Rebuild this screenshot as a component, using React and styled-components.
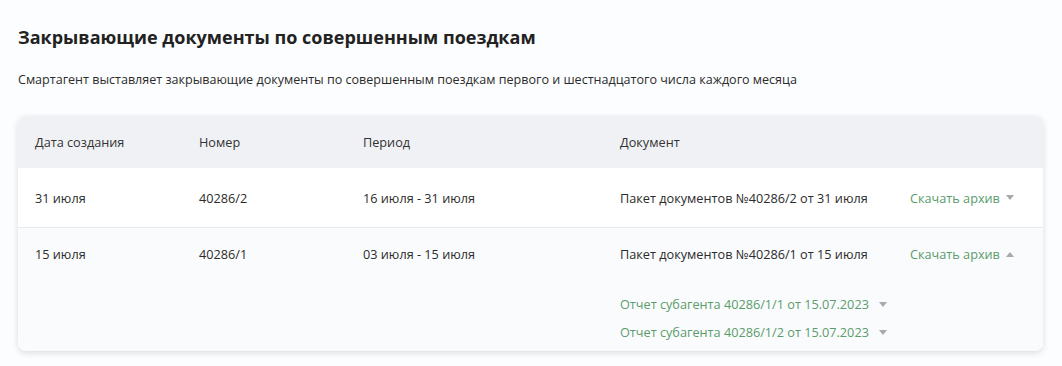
import React from "react";
import styled, { createGlobalStyle } from "styled-components";

const GlobalStyle = createGlobalStyle`
  *, *::before, *::after { box-sizing: border-box; }
  body {
    margin: 0;
    background: #fcfdfe;
    font-family: "Open Sans", "Noto Sans", sans-serif;
    color: #2b2b2b;
  }
`;

const Page = styled.div`
  padding: 26px 19px 15px 18px;
`;

const Title = styled.h1`
  margin: 0;
  font-size: 18px;
  line-height: 22px;
  font-weight: 700;
  color: #222;
`;

const Lead = styled.p`
  margin: 23px 0 0;
  font-size: 12.55px;
  line-height: 18px;
  color: #2b2b2b;
`;

const Card = styled.div`
  margin-top: 27px;
  border-radius: 8px;
  background: #fff;
  box-shadow: 0 2px 6px rgba(60, 72, 100, 0.18);
  overflow: hidden;
`;

const Row = styled.div`
  display: grid;
  grid-template-columns: 164px 164px 257px 290px 1fr;
  padding: ${(p) => (p.$top ? "17px 17px 0" : "0 17px")};
  min-height: ${(p) => p.$h}px;
  align-items: ${(p) => (p.$top ? "start" : "center")};
  background: ${(p) => p.$bg || "#fff"};
  border-top: ${(p) => (p.$line ? "1px solid #e8eaef" : "none")};
  font-size: 12.7px;
  line-height: 18px;
  color: ${(p) => (p.$head ? "#333" : "#2b2b2b")};
`;

const Cell = styled.div`
  white-space: nowrap;
`;

const DocCell = styled.div`
  display: flex;
  flex-direction: column;
  gap: 10px;
  white-space: nowrap;
`;

const SubList = styled.div`
  display: flex;
  flex-direction: column;
  gap: 10px;
  margin-top: 22px;
`;

const Link = styled.a`
  display: inline-flex;
  align-items: center;
  gap: ${(p) => p.$gap || 6}px;
  color: #5a9c6c;
  text-decoration: none;
  cursor: pointer;
`;

const Caret = styled.span`
  width: 0;
  height: 0;
  border-left: 4px solid transparent;
  border-right: 4px solid transparent;
  ${(p) =>
    p.$up
      ? "border-bottom: 5px solid #a6a9ad;"
      : "border-top: 5px solid #a6a9ad;"}
`;

const App = () => {
  return (
    <>
      <GlobalStyle />
      <Page>
        <Title>Закрывающие документы по совершенным поездкам</Title>
        <Lead>
          Смартагент выставляет закрывающие документы по совершенным поездкам
          первого и шестнадцатого числа каждого месяца
        </Lead>
        <Card>
          <Row $h={52} $bg="#f0f1f4" $head>
            <Cell>Дата создания</Cell>
            <Cell>Номер</Cell>
            <Cell>Период</Cell>
            <Cell>Документ</Cell>
            <Cell />
          </Row>
          <Row $h={59}>
            <Cell>31 июля</Cell>
            <Cell>40286/2</Cell>
            <Cell>16 июля - 31 июля</Cell>
            <Cell>Пакет документов №40286/2 от 31 июля</Cell>
            <Cell>
              <Link>
                Скачать архив <Caret />
              </Link>
            </Cell>
          </Row>
          <Row $h={124} $bg="#fafbfd" $line $top>
            <Cell>15 июля</Cell>
            <Cell>40286/1</Cell>
            <Cell>03 июля - 15 июля</Cell>
            <DocCell>
              <span>Пакет документов №40286/1 от 15 июля</span>
              <SubList>
                <Link $gap={10}>
                  Отчет субагента 40286/1/1 от 15.07.2023 <Caret />
                </Link>
                <Link $gap={10}>
                  Отчет субагента 40286/1/2 от 15.07.2023 <Caret />
                </Link>
              </SubList>
            </DocCell>
            <Cell>
              <Link>
                Скачать архив <Caret $up />
              </Link>
            </Cell>
          </Row>
        </Card>
      </Page>
    </>
  );
};

export default App;
